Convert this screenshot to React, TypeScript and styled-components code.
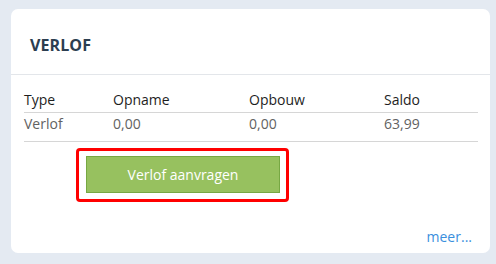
import React from 'react';
import styled, { createGlobalStyle } from 'styled-components';

const GlobalStyle = createGlobalStyle`
  html, body {
    margin: 0;
    padding: 0;
    background: #e4eaf2;
    font-family: 'Open Sans', 'Noto Sans', Arial, sans-serif;
  }
`;

const Page = styled.div`
  padding: 9px 6px 11px 11px;
`;

const Card = styled.div`
  background: #ffffff;
  border-radius: 7px;
  width: 479px;
  height: 244px;
  display: flex;
  flex-direction: column;
  box-sizing: border-box;
`;

const Header = styled.div`
  padding: 25px 19px 18px;
  border-bottom: 1px solid #e3e6ea;

  h2 {
    margin: 0;
    font-size: 16px;
    line-height: 22px;
    font-weight: 700;
    color: #2c3e50;
    letter-spacing: 0.1px;
  }
`;

const Body = styled.div`
  flex: 1;
  display: flex;
  flex-direction: column;
  padding: 15px 12px 0 13px;
`;

const Row = styled.div<{ head?: boolean }>`
  display: grid;
  grid-template-columns: 89px 136px 135px 1fr;
  border-bottom: 1px solid #d6d6d6;
  font-size: 14px;
  line-height: 20px;
  color: ${props => (props.head ? '#1e1e1e' : '#626262')};
  padding: ${props => (props.head ? '0 0 2px' : '1px 0 7px')};
`;

const Cell = styled.div``;

const Highlight = styled.div`
  align-self: flex-start;
  margin: 6px 0 0 52px;
  border: 3px solid #ff0000;
  border-radius: 4px;
  padding: 5px 6px 6px 7px;
`;

const RequestButton = styled.button`
  display: block;
  width: 194px;
  height: 37px;
  background: #97c15f;
  border: 1px solid #77a843;
  color: #ffffff;
  font-family: inherit;
  font-size: 14px;
  cursor: pointer;
  padding: 0;
`;

const Footer = styled.div`
  margin-top: auto;
  padding: 0 6px 6px 0;
  text-align: right;

  a {
    font-size: 14px;
    line-height: 20px;
    color: #3a8fdd;
    text-decoration: none;
  }
`;

const rows = [{ type: 'Verlof', opname: '0,00', opbouw: '0,00', saldo: '63,99' }];

const App: React.FC = () => (
  <>
    <GlobalStyle />
    <Page>
      <Card>
        <Header>
          <h2>VERLOF</h2>
        </Header>
        <Body>
          <Row head>
            <Cell>Type</Cell>
            <Cell>Opname</Cell>
            <Cell>Opbouw</Cell>
            <Cell>Saldo</Cell>
          </Row>
          {rows.map(r => (
            <Row key={r.type}>
              <Cell>{r.type}</Cell>
              <Cell>{r.opname}</Cell>
              <Cell>{r.opbouw}</Cell>
              <Cell>{r.saldo}</Cell>
            </Row>
          ))}
          <Highlight>
            <RequestButton>Verlof aanvragen</RequestButton>
          </Highlight>
          <Footer>
            <a href="#">meer...</a>
          </Footer>
        </Body>
      </Card>
    </Page>
  </>
);

export default App;
